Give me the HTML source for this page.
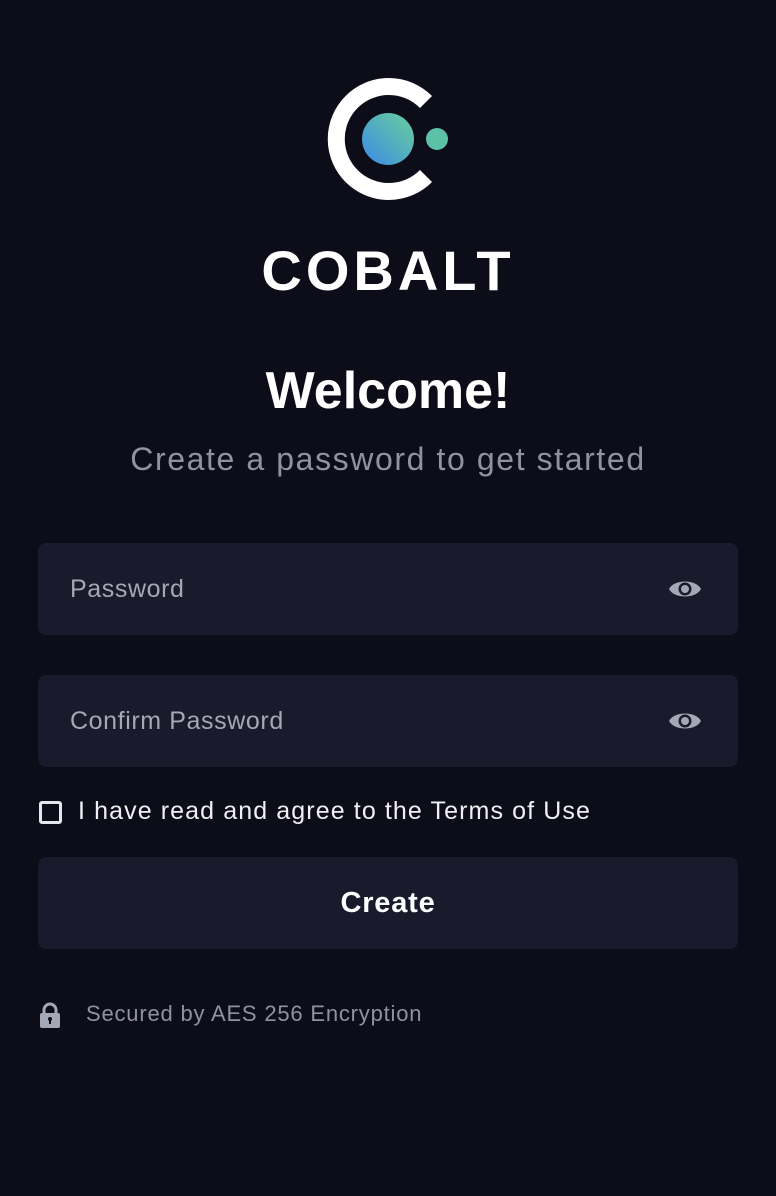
<!DOCTYPE html>
<html><head><style>
body{margin:0;width:776px;height:1196px;background:#0d0d1a;font-family:"Liberation Sans",sans-serif;position:relative;overflow:hidden}
.t{position:absolute;left:0;width:776px;text-align:center}
.f{position:absolute;left:38px;width:700px;height:92px;background:#191a2c;border-radius:8px}
.f span{position:absolute;left:32px;top:32px;font-size:25px;color:#a4a7b6;letter-spacing:0.6px}
.eye{position:absolute;right:36px;top:34px}
</style></head><body>
<svg style="position:absolute;left:0;top:0" width="776" height="220">
<defs><linearGradient id="g" x1="1" y1="0" x2="0" y2="1"><stop offset="0" stop-color="#6ad19a"/><stop offset="1" stop-color="#3b8ae6"/></linearGradient></defs>
<path d="M426 102 A52.5 52.5 0 1 0 426 176" fill="none" stroke="#fff" stroke-width="17"/>
<circle cx="388" cy="139" r="26" fill="url(#g)"/>
<circle cx="437" cy="139" r="11" fill="#5cc1a6"/>
</svg>
<div class="t" style="top:238px;font-size:56px;font-weight:bold;color:#fff;letter-spacing:4px">COBALT</div>
<div class="t" style="top:361px;font-size:52px;font-weight:bold;color:#fff">Welcome!</div>
<div class="t" style="top:441px;font-size:32px;color:#8f92a1;letter-spacing:1.6px">Create a password to get started</div>
<div class="f" style="top:543px"><span>Password</span>
<svg class="eye" width="34" height="24" viewBox="0 0 34 24"><path d="M1 12C6 2 28 2 33 12C28 22 6 22 1 12Z" fill="#a4a7b6"/><circle cx="17" cy="12" r="6.5" fill="#191a2c"/><circle cx="17" cy="12" r="4" fill="#a4a7b6"/></svg></div>
<div class="f" style="top:675px"><span>Confirm Password</span>
<svg class="eye" width="34" height="24" viewBox="0 0 34 24"><path d="M1 12C6 2 28 2 33 12C28 22 6 22 1 12Z" fill="#a4a7b6"/><circle cx="17" cy="12" r="6.5" fill="#191a2c"/><circle cx="17" cy="12" r="4" fill="#a4a7b6"/></svg></div>
<div style="position:absolute;left:39px;top:801px;width:17px;height:17px;border:3px solid #e6e6ee;border-radius:3px"></div>
<div style="position:absolute;left:78px;top:797px;font-size:25px;color:#f0f0f4;letter-spacing:1.1px">I have read and agree to the Terms of Use</div>
<div class="f" style="top:857px"><div style="text-align:center;line-height:92px;font-size:29px;font-weight:bold;color:#fff;letter-spacing:0.8px">Create</div></div>
<svg style="position:absolute;left:39px;top:1002px" width="22" height="26" viewBox="0 0 22 26"><path d="M5 12V8a6 6 0 0 1 12 0v4" fill="none" stroke="#a4a7b6" stroke-width="3"/><rect x="1" y="11" width="20" height="15" rx="2" fill="#a4a7b6"/><rect x="10" y="16" width="2" height="6" fill="#0d0d1a"/><circle cx="11" cy="17" r="2" fill="#0d0d1a"/></svg>
<div style="position:absolute;left:86px;top:1001px;font-size:22px;color:#8f92a1;letter-spacing:0.8px">Secured by AES 256 Encryption</div>
</body></html>
